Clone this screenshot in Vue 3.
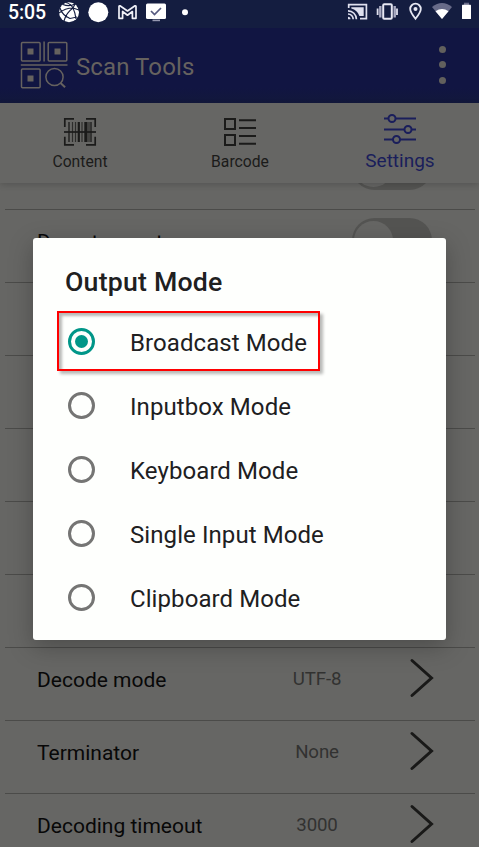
<template>
  <div class="screen">
    <!-- Android status bar -->
    <div class="status">
      <span class="clock">5:05</span>
      <svg class="status-left" width="134" height="26" viewBox="58 0 134 26">
        <circle cx="69" cy="12.3" r="10" fill="#fff" />
        <g fill="none" stroke="#141d40" stroke-width="1.1">
          <path d="M59 13Q65 8 73 8L79 10M66 2.500Q71 4 73 8T76 19M73 8Q66 13 64 21M60 8Q62 15 70 18.500L77 17M63 4.500Q69 7 75 4M73 8L75 4" />
        </g>
        <circle cx="98.300" cy="12.3" r="10" fill="#fff" />
        <path
          d="M119 18.300V6.500q0-1 1-.7L127.500 11l7.500-5.200q1-.3 1 .7v11.800h-3.600v-6.800l-4.900 3.700-4.900-3.700v6.800z"
          fill="none" stroke="#f0f1f8" stroke-width="1.700" stroke-linejoin="round"
        />
        <rect x="146" y="3.500" width="20" height="15.500" rx="1.500" fill="#fff" />
        <path d="M151 11l3.500 3.500 6.500-6.500" fill="none" stroke="#55597f" stroke-width="1.700" />
        <rect x="152.500" y="19.600" width="7.500" height="1.600" fill="#9598b0" />
        <circle cx="185" cy="12.3" r="3" fill="#fff" />
      </svg>
      <svg class="status-right" width="132" height="26" viewBox="346 0 132 26">
        <!-- cast -->
        <g fill="none" stroke="#dfe0ee" stroke-width="1.700">
          <path d="M348.700 8V4.600H366.400V18.700H360" />
          <path d="M348 10.800a8.400 8.400 0 0 1 8.400 8.400M348 14a5.200 5.200 0 0 1 5.200 5.200" />
        </g>
        <path d="M351.300 7.200h12.400v8.900h-4.300q-2-6-8.100-7.500z" fill="#dfe0ee" />
        <path d="M348 16.700a2.500 2.500 0 0 1 2.500 2.500H348z" fill="#dfe0ee" />
        <!-- vibrate -->
        <rect x="383.200" y="4.300" width="8.600" height="14.500" rx="1" fill="none" stroke="#e6e7f2" stroke-width="2" />
        <path d="M380.300 6v11.500M394.700 6v11.500" stroke="#a9abc2" stroke-width="2.400" />
        <path d="M377.600 8.500v6.500M397 8.500v6.500" stroke="#dfe0ee" stroke-width="1.800" />
        <!-- location -->
        <path d="M415.500 18.800c-3-3.800-5.300-6.800-5.300-9.800a5.300 5.300 0 0 1 10.600 0c0 3-2.300 6-5.300 9.800z" fill="none" stroke="#e6e7f2" stroke-width="1.800" />
        <circle cx="415.500" cy="9" r="2" fill="#e6e7f2" />
        <!-- wifi -->
        <path d="M432 7q10-8 20 0l-10 12z" fill="#686b89" />
        <path d="M435.500 11.200q6.500-4.600 13 0L442 19z" fill="#fff" />
        <!-- battery -->
        <rect x="464" y="2.700" width="5" height="2.300" fill="#686b89" />
        <rect x="462" y="4.700" width="9" height="14.300" rx=".6" fill="#fff" />
      </svg>
    </div>

    <header class="appbar">
      <svg width="48" height="48" viewBox="20.500 40.500 48 48" fill="none" stroke="#66625f" stroke-width="1.500">
        <rect x="22" y="41.900" width="18.600" height="18.600" rx="1" />
        <rect x="48.700" y="41.900" width="18.600" height="18.600" rx="1" />
        <rect x="22" y="68.600" width="18.600" height="18.600" rx="1" />
        <path d="M44.600 41v20M21.300 64.400h46.700" />
        <circle cx="55" cy="76.500" r="8.600" />
        <path d="M61 82.500l4.600 4.200" stroke-width="2" />
        <path d="M28 48h6v6h-6zM55 48h6v6h-6zM28 75h6v6h-6z" fill="#66625f" stroke="none" />
      </svg>
      <span class="app-title">Scan Tools</span>
      <div class="more"><i></i><i></i><i></i></div>
    </header>

    <nav class="tabs">
      <div class="tab">
        <svg width="34" height="30" viewBox="63 117 34 30" stroke="#1b1b1a" fill="none">
          <path d="M74 118.900h-9.200v8M86 118.900h9.200v8M74 144.800h-9.200v-8M86 144.800h9.200v-8" stroke-width="1.700" />
          <path d="M69 122v20M91 122v20" stroke-width="1.300" />
          <path d="M72.500 122v20M75.500 122v20M82 122v20M89 122v20" stroke-width="1.200" opacity=".75" />
          <path d="M78.800 122v20" stroke-width="2.200" />
          <path d="M85.900 122v20" stroke-width="3.200" />
          <path d="M64 132h32" stroke-width="1.700" />
        </svg>
        <span>Content</span>
      </div>
      <div class="tab">
        <svg width="34" height="30" viewBox="223 117 34 30" stroke="#1b1b1a" fill="none" stroke-width="2">
          <path d="M225 119h10v10h-10zM225 135h10v10h-10z" />
          <path d="M239 120.300h17M239 128h17M239 136h17M239 143.700h17" />
        </svg>
        <span>Barcode</span>
      </div>
      <div class="tab current">
        <svg width="34" height="32" viewBox="383 113 34 32" stroke="#1a1e5b" fill="none" stroke-width="2">
          <path d="M384 118.500h4.500M395.500 118.500H416M384 129.500h20.500M411.500 129.500h4.500M384 139.500h9M400 139.500h16" />
          <circle cx="392" cy="118.500" r="3.500" />
          <circle cx="408" cy="129.500" r="3.500" />
          <circle cx="396.500" cy="139.500" r="3.500" />
        </svg>
        <span>Settings</span>
      </div>
    </nav>

    <main class="list">
      <div v-for="(row, i) in rows" :key="i" class="row">
        <span class="name">{{ row.name }}</span>
        <span class="value">{{ row.value }}</span>
        <span class="control">
          <span v-if="row.toggle" class="toggle"></span>
          <svg v-else-if="row.value" width="26" height="40" viewBox="0 0 26 40">
            <path d="M3 2.500L22.500 20 3 37.500" fill="none" stroke="#191918" stroke-width="3" stroke-linecap="round" />
          </svg>
        </span>
      </div>
    </main>

    <section class="dialog" role="dialog">
      <h2>Output Mode</h2>
      <label
        v-for="mode in modes"
        :key="mode"
        class="option"
        :class="{ selected: mode === selected }"
        @click="selected = mode"
      >
        <span class="radio"></span>
        <span>{{ mode }}</span>
      </label>
      <div class="highlight"></div>
    </section>
  </div>
</template>

<script setup>
import { ref } from 'vue'

const modes = ['Broadcast Mode', 'Inputbox Mode', 'Keyboard Mode', 'Single Input Mode', 'Clipboard Mode']
const selected = ref('Broadcast Mode')

const rows = [
  { toggle: true },
  { name: 'Do not repeat', toggle: true },
  {},
  {},
  {},
  {},
  {},
  { name: 'Decode mode', value: 'UTF-8' },
  { name: 'Terminator', value: 'None' },
  { name: 'Decoding timeout', value: '3000' },
]
</script>

<style>
body { margin: 0; background: #666664; }
</style>

<style scoped>
* { box-sizing: border-box; }
.screen {
  position: relative;
  display: flex; flex-direction: column;
  width: 479px; height: 847px; overflow: hidden;
  background: #666664;
  font-family: Roboto, "Liberation Sans", sans-serif;
}

.status {
  display: flex; align-items: center;
  height: 28px; flex: none;
  padding: 0 1px 2px 8px;
  background: #141d40; color: #fff;
}
.clock { width: 50px; font-size: 19.5px; font-weight: 500; line-height: 26px; letter-spacing: -.1px; white-space: nowrap; }
.status-right { margin-left: auto; }

.appbar {
  display: flex; align-items: center;
  height: 75px; flex: none;
  padding: 0 31px 2px 20px;
  background: linear-gradient(#111542 80%, #12183b);
}
.app-title { margin-left: 8px; color: #66625f; font-size: 24px; line-height: 30px; letter-spacing: .1px; padding-top: 4px; }
.more { display: flex; flex-direction: column; gap: 8.500px; margin-left: auto; margin-right: 2px; }
.more i { width: 7px; height: 7px; border-radius: 50%; background: #62605d; }

.tabs {
  position: relative; z-index: 1;
  display: flex; height: 80px; flex: none;
  background: #666664;
  box-shadow: 0 2px 6px rgba(0, 0, 0, .16);
}
.tab {
  display: flex; flex-direction: column; align-items: center;
  width: 160px; flex: none; padding-top: 14px;
  font-size: 15.700px; line-height: 20px; color: #1b1b1a;
}
.tab span { margin-top: 5px; }
.tab.current { padding-top: 10px; font-size: 19px; color: #1a1e5b; }
.tab.current span { margin-top: 6px; }

.list { flex: 1; overflow: hidden; padding: 0 4px 0 5px; }
.row {
  display: flex; align-items: flex-start;
  height: 73px;
  border-bottom: 1px solid #4b4b49;
}
.row:first-child { margin-top: -46px; }
.name { width: 232px; padding: 20px 0 0 32px; font-size: 21px; line-height: 25px; color: #080808; white-space: nowrap; }
.value { width: 160px; padding-top: 19px; text-align: center; font-size: 18.700px; line-height: 25px; letter-spacing: -.15px; color: #323231; }
.control { display: flex; width: 73px; padding-left: 12px; }
.control svg { flex: none; margin: 10px 0 0 -.5px; }
.toggle {
  flex: none; width: 80px; height: 45px; margin: 8px 0 0 -57px; padding: 3px 2px;
  border-radius: 23px; background: #545452;
}
.toggle::before {
  content: ""; display: block; width: 39px; height: 39px;
  border-radius: 50%; background: #666664;
}

.dialog {
  position: absolute; z-index: 2; left: 33px; top: 238px;
  width: 413px; height: 402px; padding: 28px 32px 0;
  border-radius: 3px; background: #fefffd;
  box-shadow: 0 7px 24px rgba(0, 0, 0, .26);
  color: #20201f;
}
.dialog h2 { margin: 0 0 13px; font-size: 26.700px; font-weight: 500; line-height: 32px; letter-spacing: .2px; }
.option { display: flex; align-items: center; height: 64px; font-size: 24px; letter-spacing: .08px; }
.radio {
  display: flex; align-items: center; justify-content: center;
  width: 27px; height: 27px; margin: 0 35px 3px 3px;
  border: 3px solid #757574; border-radius: 50%;
}
.selected .radio { border-color: #009688; }
.selected .radio::before { content: ""; flex: none; width: 13px; height: 13px; border-radius: 50%; background: #009688; }

/* red frame over the chosen option */
.highlight {
  position: absolute; left: 24px; top: 73px;
  width: 263px; height: 60px;
  border: 2px solid #f00;
  box-shadow: 3px 3px 3px rgba(0, 0, 0, .28), inset 3px 3px 3px rgba(0, 0, 0, .28);
  pointer-events: none;
}
</style>
